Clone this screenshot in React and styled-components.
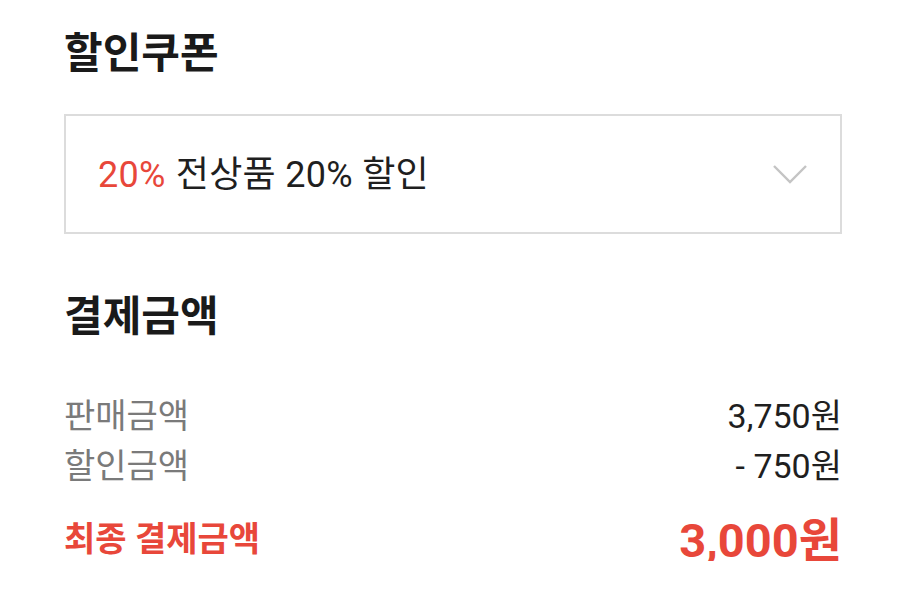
import React from "react";
import styled, { createGlobalStyle } from "styled-components";

const GlobalStyle = createGlobalStyle`
    body {
        margin: 0;
        background: #fff;
        font-family: Roboto, "Noto Sans CJK KR", sans-serif;
        color: #1f1f1f;
    }
`;

const Page = styled.div`
    width: 904px;
    padding: 26px 62px 0 64px;
    box-sizing: border-box;
`;

const Title = styled.h2`
    margin: 0;
    font-size: 42px;
    font-weight: 700;
    line-height: 56px;
    color: #1a1a1a;
`;

const Select = styled.div`
    margin-top: 32px;
    height: 120px;
    border: 2px solid #dcdcdc;
    box-sizing: border-box;
    display: flex;
    align-items: center;
    justify-content: space-between;
    padding: 0 32px 0 32px;
    font-size: 36px;
    letter-spacing: 0.3px;
`;

const SelectText = styled.span`
    margin-bottom: 6px;
`;

const Rate = styled.span`
    color: #e8473a;
    margin-right: 10px;
`;

const Chevron = () => (
    <svg width="36" height="22" viewBox="0 0 36 22">
        <path d="M2 3 L18 19 L34 3" fill="none" stroke="#c4c4c4" strokeWidth="2.4" />
    </svg>
);

const Section = styled.div`
    margin-top: 55px;
`;

const Rows = styled.div`
    margin-top: 43px;
`;

const Row = styled.div`
    display: flex;
    justify-content: space-between;
    align-items: center;
    height: 50px;
    font-size: 34px;
`;

const Label = styled.span`
    color: ${(p) => (p.$total ? "#e8473a" : "#7a7a7a")};
    font-weight: ${(p) => (p.$total ? 700 : 400)};
`;

const Value = styled.span`
    color: ${(p) => (p.$total ? "#e8473a" : "#1f1f1f")};
    font-weight: ${(p) => (p.$total ? 700 : 400)};
    font-size: ${(p) => (p.$total ? "47px" : "34px")};
`;

const TotalRow = styled(Row)`
    margin-top: 23px;
`;

export default function App() {
    return (
        <Page>
            <GlobalStyle />
            <Title>할인쿠폰</Title>
            <Select>
                <SelectText>
                    <Rate>20%</Rate>전상품 20% 할인
                </SelectText>
                <Chevron />
            </Select>
            <Section>
                <Title>결제금액</Title>
                <Rows>
                    <Row>
                        <Label>판매금액</Label>
                        <Value>3,750원</Value>
                    </Row>
                    <Row>
                        <Label>할인금액</Label>
                        <Value>- 750원</Value>
                    </Row>
                    <TotalRow>
                        <Label $total>최종 결제금액</Label>
                        <Value $total>3,000원</Value>
                    </TotalRow>
                </Rows>
            </Section>
        </Page>
    );
}
